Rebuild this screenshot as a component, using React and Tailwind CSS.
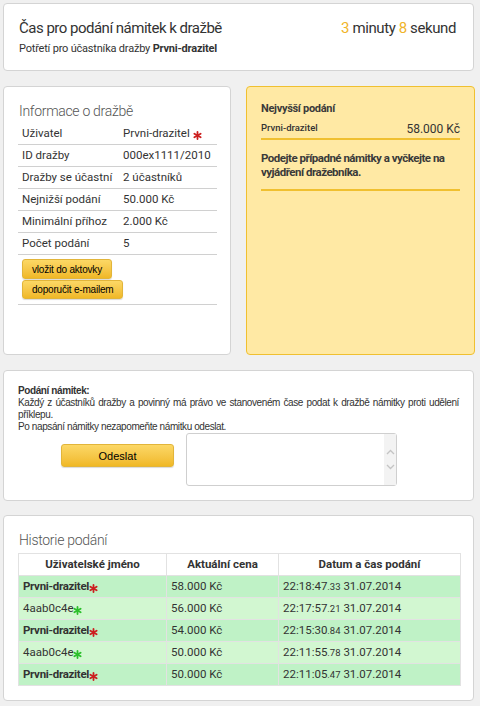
import React from 'react';

const Star = ({ color }) => (
  <svg width="9" height="9" viewBox="0 0 10 10" className="inline-block align-[-3px]">
    <g stroke={color} strokeWidth="2" strokeLinecap="round">
      <line x1="5" y1="1" x2="5" y2="9" />
      <line x1="1.5" y1="3" x2="8.5" y2="7" />
      <line x1="1.5" y1="7" x2="8.5" y2="3" />
    </g>
  </svg>
);

const infoRows = [
  ['ID dražby', '000ex1111/2010'],
  ['Dražby se účastní', '2 účastníků'],
  ['Nejnižší podání', '50.000 Kč'],
  ['Minimální příhoz', '2.000 Kč'],
  ['Počet podání', '5'],
];

const history = [
  { user: 'Prvni-drazitel', mine: true, price: '58.000 Kč', time: '22:18:47', ms: '.33' },
  { user: '4aab0c4e', mine: false, price: '56.000 Kč', time: '22:17:57', ms: '.21' },
  { user: 'Prvni-drazitel', mine: true, price: '54.000 Kč', time: '22:15:30', ms: '.84' },
  { user: '4aab0c4e', mine: false, price: '50.000 Kč', time: '22:11:55', ms: '.78' },
  { user: 'Prvni-drazitel', mine: true, price: '50.000 Kč', time: '22:11:05', ms: '.47' },
];

const btn =
  'rounded-[3px] border border-[#e2b53a] bg-gradient-to-b from-[#fcd865] to-[#f0b824] text-black shadow-[0_1px_1px_rgba(0,0,0,0.15)] font-["Liberation_Sans",sans-serif]';

const App = () => {
  return (
    <div className="min-h-[706px] w-[480px] bg-[#f0f0f0] px-[3px] pt-[3px] font-['Roboto',sans-serif] text-[#333]">
      <div className="w-[471px] rounded-[4px] border border-[#d4d4d4] bg-white h-[68px] px-[15px] pt-[15px] flex justify-between">
        <div>
          <div className="text-[15px] leading-[19px] tracking-[-0.5px] text-[#333]">Čas pro podání námitek k dražbě</div>
          <div className="text-[11px] leading-[15px] tracking-[-0.2px] mt-[3px] text-[#333]">
            Potřetí pro účastníka dražby <b className="font-bold">Prvni-drazitel</b>
          </div>
        </div>
        <div className="text-[15px] leading-[19px] tracking-[-0.4px] text-[#333] pr-[2px]">
          <span className="text-[#f0b429]">3</span> minuty <span className="text-[#f0b429]">8</span> sekund
        </div>
      </div>

      <div className="mt-[15px] flex gap-[15px] w-[472px]">
        <div className="w-[228px] h-[269px] rounded-[4px] border border-[#d4d4d4] bg-white px-[14px] pt-[15px]">
          <div className="text-[14px] leading-[19px] tracking-[-0.3px] font-light text-[#555] pl-[1px]">Informace o dražbě</div>
          <div className="mt-[2px] text-[11.5px] w-[199px]">
            <div className="flex h-[22px] items-center border-b border-[#d0d0d0] pl-[4px]">
              <span className="w-[101px]">Uživatel</span>
              <span>Prvni-drazitel <Star color="#cc1f1f" /></span>
            </div>
            {infoRows.map(([k, v]) => (
              <div key={k} className="flex h-[22px] items-center border-b border-[#d0d0d0] pl-[4px]">
                <span className="w-[101px]">{k}</span>
                <span>{v}</span>
              </div>
            ))}
            <div className="border-b border-[#d0d0d0] pl-[4px] pt-[4px] pb-[5px] flex flex-col items-start gap-[1px]">
              <button className={`${btn} h-[20px] px-[9px] text-[10px] tracking-[-0.2px]`}>vložit do aktovky</button>
              <button className={`${btn} h-[19px] px-[9px] text-[10px] tracking-[-0.2px]`}>doporučit e-mailem</button>
            </div>
          </div>
        </div>

        <div className="w-[229px] h-[269px] rounded-[4px] border border-[#f0c030] bg-[#ffe9a4] px-[14px] pt-[15px]">
          <div className="text-[11px] leading-[14px] tracking-[-0.3px] font-bold text-[#3a3a3a]">Nejvyšší podání</div>
          <div className="mt-[5px] flex justify-between items-end border-b-2 border-[#f0c030] pb-[1px]">
            <span className="text-[9.5px] font-medium text-[#333] leading-[13px] mb-[3px]">Prvni-drazitel</span>
            <span className="text-[12px] leading-[16px] text-[#333]">58.000 Kč</span>
          </div>
          <div className="mt-[11px] text-[11.5px] leading-[14px] tracking-[-0.5px] font-bold text-[#3a3a3a] pb-[10px] border-b-2 border-[#f0c030]">
            Podejte případné námitky a vyčkejte na vyjádření dražebníka.
          </div>
        </div>
      </div>

      <div className="mt-[15px] w-[471px] h-[131px] rounded-[4px] border border-[#d4d4d4] bg-white px-[14px] pt-[14px] font-['Liberation_Sans',sans-serif] text-[10px] leading-[12px] tracking-[-0.4px] text-[#333]">
        <div className="font-bold">Podání námitek:</div>
        <div className="text-justify">
          Každý z účastníků dražby a povinný má právo ve stanoveném čase podat k dražbě námitky proti udělení příklepu.
        </div>
        <div>Po napsání námitky nezapomeňte námitku odeslat.</div>
        <div className="flex">
          <div className="w-[156px] flex justify-end pt-[11px]">
            <button className={`${btn} w-[113px] h-[23px] text-[11px] tracking-normal`}>Odeslat</button>
          </div>
          <div className="ml-[12px] w-[211px] h-[53px] rounded-[3px] border border-[#cfcfcf] bg-white flex justify-end">
            <div className="w-[12px] h-full bg-[#f3f3f3] flex flex-col items-center justify-center gap-[9px] text-[#c4c4c4]">
              <svg width="9" height="6" viewBox="0 0 9 6"><path d="M1 5 L4.5 1.5 L8 5" fill="none" stroke="currentColor" strokeWidth="1.3" /></svg>
              <svg width="9" height="6" viewBox="0 0 9 6"><path d="M1 1 L4.5 4.5 L8 1" fill="none" stroke="currentColor" strokeWidth="1.3" /></svg>
            </div>
          </div>
        </div>
      </div>

      <div className="mt-[14px] w-[471px] h-[186px] rounded-[4px] border border-[#d4d4d4] bg-white px-[14px] pt-[15px]">
        <div className="text-[14px] leading-[19px] tracking-[-0.3px] font-light text-[#555] pl-[1px]">Historie podání</div>
        <table className="mt-[3px] w-[443px] border-collapse text-[11.5px] text-[#333]">
          <thead>
            <tr className="h-[22px] bg-white">
              <th className="w-[148px] border border-[#e2e2e2] font-bold text-center">Uživatelské jméno</th>
              <th className="w-[112px] border border-[#e2e2e2] font-bold text-center">Aktuální cena</th>
              <th className="border border-[#e2e2e2] font-bold text-center">Datum a čas podání</th>
            </tr>
          </thead>
          <tbody>
            {history.map((r, i) => (
              <tr key={i} className={`h-[22px] ${r.mine ? 'bg-[#bff2c6]' : 'bg-[#d2f7d1]'}`}>
                <td className={`border border-[#e2e2e2] pl-[4px] ${r.mine ? 'font-bold tracking-[-0.3px]' : ''}`}>
                  {r.user}
                  <Star color={r.mine ? '#cc1f1f' : '#2bbf2b'} />
                </td>
                <td className="border border-[#e2e2e2] pl-[4px]">{r.price}</td>
                <td className="border border-[#e2e2e2] pl-[4px]">
                  {r.time}
                  <span className="text-[9.5px]">{r.ms}</span> 31.07.2014
                </td>
              </tr>
            ))}
          </tbody>
        </table>
      </div>
    </div>
  );
};

export default App;
